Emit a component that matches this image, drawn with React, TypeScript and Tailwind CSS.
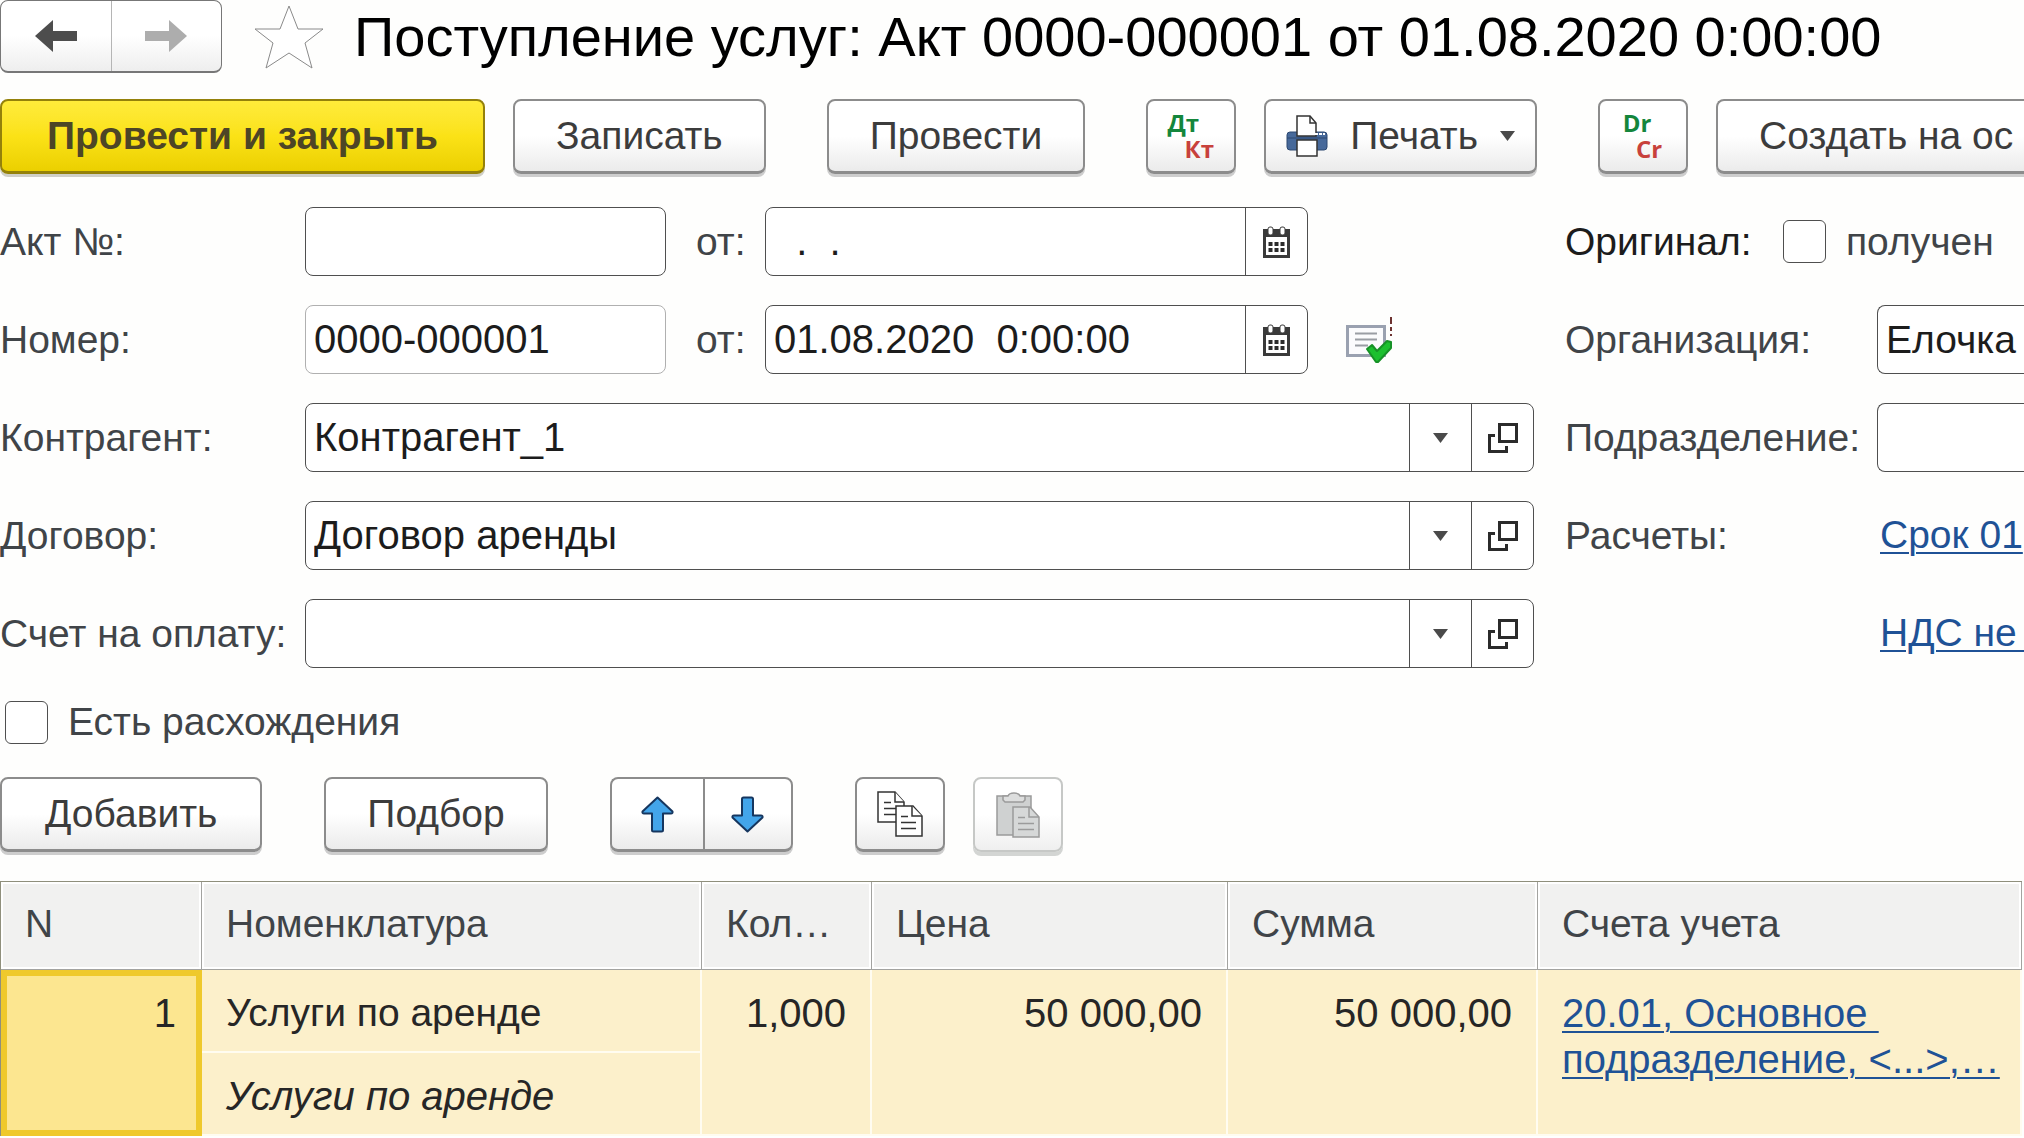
import type { ReactNode } from "react";
import { clsx } from "clsx";

const navButton = "flex h-full flex-1 items-center justify-center";

function Button({
  children,
  label,
  primary,
  disabled,
  className,
}: {
  children: ReactNode;
  label?: string;
  primary?: boolean;
  disabled?: boolean;
  className?: string;
}) {
  return (
    <button
      type="button"
      aria-label={label}
      disabled={disabled}
      className={clsx(
        "flex h-[75px] shrink-0 items-center justify-center whitespace-nowrap rounded-lg border-2 leading-[46px]",
        primary
          ? "border-[#94810a] border-b-[3px] bg-linear-to-b from-[#ffeb3a] via-[#fbe216] to-[#ebd000] px-[45px] font-bold text-[#4d4526] shadow-[0_3px_0_#cfcfc8]"
          : disabled
            ? "border-[#c6c8c6] bg-linear-to-b from-white from-50% to-[#efefef] shadow-[0_4px_0_#d3d5d3]"
            : "border-[#8c8c8c] border-b-[3px] bg-linear-to-b from-white from-50% to-[#ebebeb] text-[#3c3c3c] shadow-[0_3px_0_#cdcdcd]",
        className
      )}
    >
      {children}
    </button>
  );
}

function NavArrow({ className }: { className?: string }) {
  return (
    <svg width="42" height="32" viewBox="0 0 42 32" className={className} aria-hidden="true">
      <path d="M0 16 18 0V11H42V21H18V32Z" fill="currentColor" />
    </svg>
  );
}

function MoveArrow({ className }: { className?: string }) {
  return (
    <svg width="33" height="37" viewBox="0 0 33 37" className={className} aria-hidden="true">
      <path
        d="M16.500 1.500 31.500 15.500Q32 17.500 30 17.500H22V34Q22 35.500 20.500 35.500H12.500Q11 35.500 11 34V17.500H3Q1 17.500 1.500 15.500Z"
        fill="#43a5ea"
        stroke="#16365f"
        strokeWidth="2"
        strokeLinejoin="round"
      />
    </svg>
  );
}

function CalendarIcon() {
  return (
    <svg width="27" height="32" viewBox="0 0 27 32" aria-hidden="true">
      <path d="M0 3H27V32H0Z" fill="#3a3a3a" />
      <path d="M3 11H24V29H3Z" fill="#fff" />
      <rect x="5" y="1" width="5" height="8" rx="2" fill="#fff" stroke="#3a3a3a" />
      <rect x="17" y="1" width="5" height="8" rx="2" fill="#fff" stroke="#3a3a3a" />
      <path
        d="M5.500 16h4v4h-4zM11.500 16h4v4h-4zM17.500 16h4v4h-4zM5.500 22h4v4h-4zM11.500 22h4v4h-4zM17.500 22h4v4h-4z"
        fill="#2b2b2b"
      />
    </svg>
  );
}

function OpenIcon() {
  return (
    <svg width="30" height="30" viewBox="0 0 30 30" fill="none" stroke="#2b2b2b" strokeWidth="3" aria-hidden="true">
      <path d="M11.500 1.500H28.500V18.500H11.500Z" />
      <path d="M7 12.500H1.500V28.500H18.500V23" />
    </svg>
  );
}

function PostedIcon() {
  return (
    <svg width="46" height="46" viewBox="0 0 46 46" fill="none" aria-label="Проведен" role="img">
      <path d="M1.500 9.500H38.500V38.500H1.500Z" fill="#fbfbfd" stroke="#9aa1b0" strokeWidth="3" />
      <path d="M9 16.500H31M9 22.500H31M9 28.500H22" stroke="#9a9da4" strokeWidth="2" />
      <path d="M45 0V7M45 10V14M45 17V19" stroke="#6d3230" strokeWidth="2" />
      <path
        d="M21 32 26 28 31 34 41 24 45 25V31L32 45H30Z"
        fill="#1cc02f"
        stroke="#179227"
        strokeWidth="2"
        strokeLinejoin="round"
      />
    </svg>
  );
}

function PrinterIcon() {
  return (
    <svg width="42" height="42" viewBox="0 0 42 42" aria-hidden="true">
      <rect x="1" y="17" width="40" height="18" rx="3" fill="#47699a" stroke="#2c4871" strokeWidth="1" />
      <path d="M1 23H41" stroke="#2c4871" strokeWidth="1" />
      <path d="M11 21V1H24L30 8V21Z" fill="#fff" stroke="#333" strokeWidth="1.500" />
      <path d="M24 1V8H30" fill="none" stroke="#333" strokeWidth="1.500" />
      <path d="M29 18h3v2h-3zM33 18h3v2h-3zM37 18h2v2h-2z" fill="#fff" />
      <path d="M11 25H31V41H11Z" fill="#fff" stroke="#333" strokeWidth="1.500" />
    </svg>
  );
}

function CopyIcon() {
  return (
    <svg width="46" height="46" viewBox="0 0 46 46" fill="#fff" stroke="#333" strokeWidth="1.500" aria-hidden="true">
      <path d="M1 1H18L27 11V31H1Z" />
      <path d="M18 1V11H27M7 11.500H14M7 17.500H19M7 23.500H19" />
      <path d="M19 15H36L45 25V45H19Z" />
      <path d="M35 15V25H45M24 25.500H31M24 31.500H39M24 37.500H39" />
    </svg>
  );
}

function PasteIcon() {
  return (
    <svg width="44" height="46" viewBox="0 0 44 46" stroke="#9b9b9b" strokeWidth="1.500" aria-hidden="true">
      <path d="M1 4H35V43H1Z" fill="#cfd1d1" />
      <path d="M7 8V4H12Q13 1 18 1T24 4H29V8L27 10H9Z" fill="#dddede" />
      <path d="M17 15H34L43 25V45H17Z" fill="#d6d8d8" />
      <path d="M33 15V25H43M22 25.500H29M22 31.500H38M22 37.500H38" fill="none" />
    </svg>
  );
}

function Caret() {
  return (
    <svg width="15" height="10" viewBox="0 0 15 10" aria-hidden="true">
      <path d="M0 0H15L7.500 10Z" fill="#4a4a4a" />
    </svg>
  );
}

const fieldBox = "flex h-[69px] rounded-lg border border-[#4f4f4f] bg-white";
const fieldInput = "h-full w-full min-w-0 flex-1 bg-transparent px-2 text-[40px] text-[#1c1c1c] outline-none";
const fieldButton = "flex h-full w-[62px] shrink-0 items-center justify-center border-l border-[#4f4f4f]";
const labelText = "shrink-0 whitespace-nowrap leading-[46px]";
const entryLabel = "flex flex-col font-['Open_Sans',sans-serif] text-2xl font-bold leading-[26px]";

function DateField({ id, value }: { id: string; value: string }) {
  return (
    <div className={clsx(fieldBox, "w-[543px]")}>
      <input id={id} defaultValue={value} className={fieldInput} />
      <button type="button" aria-label="Выбрать дату" className={fieldButton}>
        <CalendarIcon />
      </button>
    </div>
  );
}

function LookupRow({ id, label, value }: { id: string; label: string; value: string }) {
  return (
    <div className="flex items-center">
      <label htmlFor={id} className={clsx(labelText, "w-[305px]")}>
        {label}
      </label>
      <div className={clsx(fieldBox, "min-w-0 flex-1")}>
        <input id={id} defaultValue={value} className={fieldInput} />
        <button type="button" aria-label="Выбрать" className={fieldButton}>
          <Caret />
        </button>
        <button type="button" aria-label="Открыть" className={fieldButton}>
          <OpenIcon />
        </button>
      </div>
    </div>
  );
}

const lookups = [
  { id: "contractor", label: "Контрагент:", value: "Контрагент_1" },
  { id: "contract", label: "Договор:", value: "Договор аренды" },
  { id: "invoice", label: "Счет на оплату:", value: "" },
];

const columns = ["N", "Номенклатура", "Кол…", "Цена", "Сумма", "Счета учета"];

const checkbox = "size-[43px] shrink-0 appearance-none rounded-md border border-[#4f4f4f] bg-white";
const link = "text-[#1f5296] underline decoration-2 underline-offset-4";
const cell = "border-r-2 border-b-2 border-[#fffcf0] bg-[#fcf0cb] px-6 pt-5 align-top leading-[46px]";

export default function App() {
  return (
    <div className="overflow-hidden bg-[#fefefd] font-['Liberation_Sans',Arial,sans-serif] text-[39px] text-[#404448]">
      <header className="flex h-[73px] items-start">
        <div className="flex h-[73px] w-[222px] shrink-0 rounded-lg border border-b-2 border-[#777] bg-linear-to-b from-white from-50% to-[#eee]">
          <button type="button" aria-label="Назад" className={clsx(navButton, "border-r border-[#b5b5b5]")}>
            <NavArrow className="text-[#4d4d4d]" />
          </button>
          <button type="button" aria-label="Вперед" className={navButton}>
            <NavArrow className="rotate-180 text-[#adadad]" />
          </button>
        </div>
        <button type="button" aria-label="В избранное" className="mt-1 ml-8 shrink-0">
          <svg width="70" height="66" viewBox="0 0 70 66" aria-hidden="true">
            <path
              d="M35 2 44 25H69L51 39 58 64 35 49 12 64 19 39 1 25H26Z"
              fill="#fff"
              stroke="#8a8a8a"
              strokeWidth="1"
            />
          </svg>
        </button>
        <h1 className="ml-[30px] whitespace-nowrap text-[56px] leading-[73px] text-black">
          Поступление услуг: Акт 0000-000001 от 01.08.2020 0:00:00
        </h1>
      </header>

      <div className="mt-[26px] flex gap-[61px]">
        <div className="flex gap-7">
          <Button primary>Провести и закрыть</Button>
          <Button className="px-[41px]">Записать</Button>
        </div>
        <Button className="px-[41px]">Провести</Button>
        <div className="flex gap-7">
          <Button label="Проводки" className="w-[90px]">
            <span className={entryLabel}>
              <span className="pr-4 text-[#14863c]">Дт</span>
              <span className="pl-4 text-[#c8413c]">Кт</span>
            </span>
          </Button>
          <Button className="gap-[22px] px-5">
            <PrinterIcon />
            <span>Печать</span>
            <Caret />
          </Button>
        </div>
        <div className="flex min-w-0 flex-1 gap-7">
          <Button label="Dr Cr" className="w-[90px]">
            <span className={entryLabel}>
              <span className="pr-3 text-[#14863c]">Dr</span>
              <span className="pl-3 text-[#c8413c]">Cr</span>
            </span>
          </Button>
          <Button className="flex-1 justify-start rounded-r-none border-r-0 pl-[41px]">Создать на ос</Button>
        </div>
      </div>

      <div className="mt-[33px] flex gap-[31px]">
        <div className="flex min-w-0 flex-1 flex-col gap-[29px]">
          <div className="flex items-center">
            <label htmlFor="act" className={clsx(labelText, "w-[305px]")}>
              Акт №:
            </label>
            <div className={clsx(fieldBox, "w-[361px]")}>
              <input id="act" className={fieldInput} />
            </div>
            <label htmlFor="act-date" className={clsx(labelText, "w-[99px] pl-[30px]")}>
              от:
            </label>
            <DateField id="act-date" value="  .  ." />
          </div>
          <div className="flex items-center">
            <label htmlFor="number" className={clsx(labelText, "w-[305px]")}>
              Номер:
            </label>
            <div className="flex h-[69px] w-[361px] rounded-lg border border-[#b0b0b0] bg-white">
              <input id="number" readOnly value="0000-000001" className={fieldInput} />
            </div>
            <label htmlFor="number-date" className={clsx(labelText, "w-[99px] pl-[30px]")}>
              от:
            </label>
            <DateField id="number-date" value="01.08.2020  0:00:00" />
            <span className="ml-[38px]">
              <PostedIcon />
            </span>
          </div>
          {lookups.map((row) => (
            <LookupRow key={row.id} {...row} />
          ))}
        </div>

        <div className="flex w-[459px] shrink-0 flex-col gap-[29px]">
          <div className="flex h-[69px] items-center">
            <span className={clsx(labelText, "w-[218px] text-[#1c1c1c]")}>Оригинал:</span>
            <input id="received" type="checkbox" className={checkbox} />
            <label htmlFor="received" className={clsx(labelText, "ml-5")}>
              получен
            </label>
          </div>
          <div className="flex items-center">
            <label htmlFor="organization" className={clsx(labelText, "w-[312px]")}>
              Организация:
            </label>
            <div className={clsx(fieldBox, "min-w-0 flex-1 rounded-r-none border-r-0")}>
              <input
                id="organization"
                defaultValue="Елочка"
                className="h-full w-full min-w-0 bg-transparent pl-2 text-[#1c1c1c] outline-none"
              />
            </div>
          </div>
          <div className="flex items-center">
            <label htmlFor="department" className={clsx(labelText, "w-[312px]")}>
              Подразделение:
            </label>
            <div className={clsx(fieldBox, "min-w-0 flex-1 rounded-r-none border-r-0")}>
              <input id="department" className={fieldInput} />
            </div>
          </div>
          <div className="flex h-[69px] items-center">
            <span className={clsx(labelText, "w-[315px]")}>Расчеты:</span>
            <a href="#payment" className={clsx(link, "whitespace-pre")}>
              Срок 01
            </a>
          </div>
          <div className="flex h-[69px] items-center pl-[315px]">
            <a href="#vat" className={clsx(link, "whitespace-pre")}>
              {"НДС не "}
            </a>
          </div>
        </div>
      </div>

      <div className="mt-[31px] flex items-center pl-[5px]">
        <input id="discrepancy" type="checkbox" className={checkbox} />
        <label htmlFor="discrepancy" className={clsx(labelText, "ml-5")}>
          Есть расхождения
        </label>
      </div>

      <div className="mt-8 flex gap-[62px]">
        <Button className="px-[43px]">Добавить</Button>
        <Button className="px-[41px]">Подбор</Button>
        <div className="flex">
          <Button label="Переместить вверх" className="w-[93px] rounded-r-none border-r-0">
            <MoveArrow />
          </Button>
          <Button label="Переместить вниз" className="w-[90px] rounded-l-none">
            <MoveArrow className="rotate-180" />
          </Button>
        </div>
        <div className="flex gap-7">
          <Button label="Скопировать" className="w-[90px]">
            <CopyIcon />
          </Button>
          <Button label="Вставить" disabled className="w-[90px]">
            <PasteIcon />
          </Button>
        </div>
      </div>

      <div className="mt-[29px] pr-0.5">
        <table className="w-full table-fixed border-separate border-spacing-0 border-t border-l border-[#8f8f7c] text-[#262626]">
          <colgroup>
            <col className="w-[201px]" />
            <col className="w-[500px]" />
            <col className="w-[170px]" />
            <col className="w-[356px]" />
            <col className="w-[310px]" />
            <col />
          </colgroup>
          <thead>
            <tr>
              {columns.map((name) => (
                <th
                  key={name}
                  scope="col"
                  className="h-[88px] whitespace-nowrap border-r border-b border-[#a3a3a0] bg-[#f1f1f0] px-6 pb-1 text-left font-normal leading-[46px] text-[#404448] shadow-[inset_0_0_0_2px_#fff]"
                >
                  {name}
                </th>
              ))}
            </tr>
          </thead>
          <tbody className="text-[40px]">
            <tr>
              <td
                rowSpan={2}
                className="border-[6px] border-[#efc92c] bg-[#fce690] px-5 pt-[14px] text-right align-top leading-[46px]"
              >
                1
              </td>
              <td className={clsx(cell, "h-[83px] text-[39px]")}>Услуги по аренде</td>
              <td rowSpan={2} className={clsx(cell, "text-right")}>
                1,000
              </td>
              <td rowSpan={2} className={clsx(cell, "text-right")}>
                50 000,00
              </td>
              <td rowSpan={2} className={clsx(cell, "text-right")}>
                50 000,00
              </td>
              <td rowSpan={2} className={cell}>
                <a href="#accounts" className={clsx(link, "whitespace-pre")}>
                  {"20.01, Основное \nподразделение, <...>,…"}
                </a>
              </td>
            </tr>
            <tr>
              <td className={clsx(cell, "h-[83px] italic")}>Услуги по аренде</td>
            </tr>
          </tbody>
        </table>
      </div>
    </div>
  );
}
